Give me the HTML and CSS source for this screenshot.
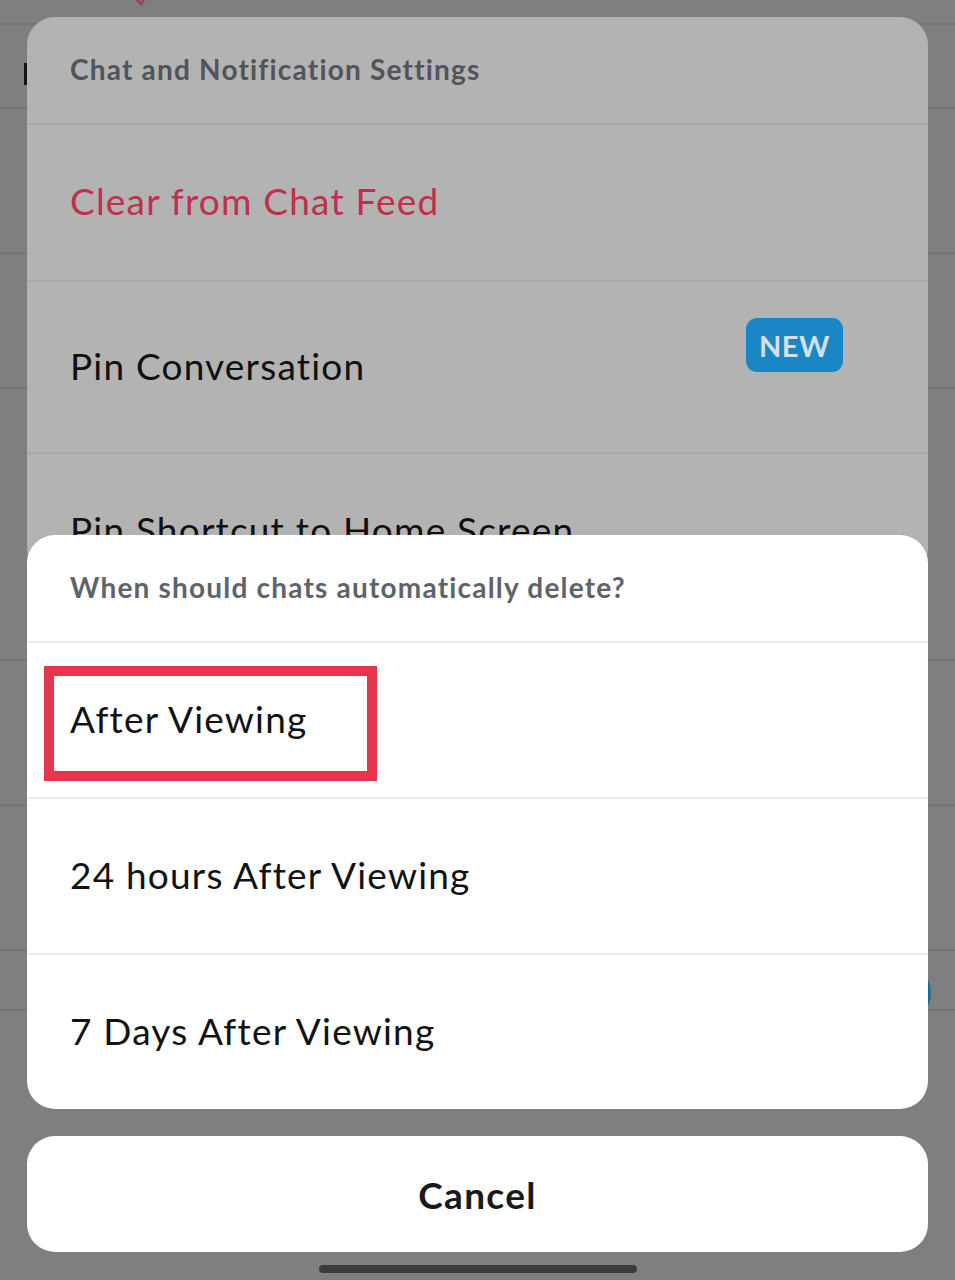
FILE: index.html
```html
<!DOCTYPE html>
<html>
<head>
<meta charset="utf-8">
<link rel="stylesheet" href="styles.css">
</head>
<body>
<div class="screen">
  <div class="bgpage">
    <div class="bgrow r1"><svg class="bgmark" width="20" height="8" viewBox="0 0 20 8"><path d="M2 0 L8 6 L12 0" fill="none" stroke="#9a4452" stroke-width="2.5"/></svg></div>
    <div class="bgrow r2"><span class="cursor"></span></div>
    <div class="bgrow r3"></div>
    <div class="bgrow r4"></div>
    <div class="bgrow r5"></div>
    <div class="bgrow r6"></div>
    <div class="bgrow r7"></div>
    <div class="bgrow r8"><span class="bgdot"></span></div>
    <div class="bgrow r9"></div>
  </div>

  <div class="sheets">
    <div class="sheet upper">
      <div class="row header">Chat and Notification Settings</div>
      <div class="row item danger">Clear from Chat Feed</div>
      <div class="row item pin">
        <span>Pin Conversation</span>
        <span class="badge">NEW</span>
      </div>
      <div class="row item shortcut">Pin Shortcut to Home Screen</div>
    </div>

    <div class="sheet lower">
      <div class="row header lh">When should chats automatically delete?</div>
      <div class="row item opt first">
        After Viewing
        <span class="highlight"></span>
      </div>
      <div class="row item opt">24 hours After Viewing</div>
      <div class="row item opt last">7 Days After Viewing</div>
    </div>

    <div class="cancel">Cancel</div>
    <div class="home"></div>
  </div>
</div>
</body>
</html>
```

FILE: styles.css
```css
html, body {
  margin: 0;
  padding: 0;
}
body {
  background: #7f7f7f;
  font-family: "Lato", "Noto Sans", sans-serif;
}
.screen {
  position: relative;
  width: 955px;
  height: 1280px;
  overflow: hidden;
  background: #7f7f7f;
}

/* dimmed page behind the sheets */
.bgpage {
  display: flex;
  flex-direction: column;
}
.bgrow {
  border-bottom: 2px solid #747474;
  position: relative;
  box-sizing: border-box;
}
.r1 { height: 25px; }
.r2 { height: 84px; }
.r3 { height: 145px; }
.r4 { height: 135px; }
.r5 { height: 272px; }
.r6 { height: 145px; }
.r7 { height: 145px; }
.r8 { height: 60px; }
.r9 { height: 100px; border-bottom: none; }
.bgmark {
  position: absolute;
  left: 133px;
  top: -2px;
}
.cursor {
  position: absolute;
  left: 24px;
  top: 38px;
  width: 3px;
  height: 22px;
  background: #151515;
}
.bgdot {
  position: absolute;
  left: 869px;
  top: 11px;
  width: 62px;
  height: 62px;
  border-radius: 50%;
  background: #1b6c98;
}

/* action sheets overlay */
.sheets {
  position: absolute;
  inset: 0;
  padding: 17px 27px 0;
  display: flex;
  flex-direction: column;
}
.sheet {
  border-radius: 28px;
  overflow: hidden;
  display: flex;
  flex-direction: column;
}
.upper {
  background: #b3b3b3;
  height: 560px;
  flex: none;
}
.lower {
  position: relative;
  background: #ffffff;
  margin-top: -42px;
  flex: none;
}
.row {
  display: flex;
  align-items: center;
  padding-left: 43px;
  box-sizing: border-box;
  flex: none;
}
.header {
  height: 108px;
  border-bottom: 2px solid #a9a9a9;
  font-size: 28px;
  font-weight: 700;
  letter-spacing: 1.2px;
  color: #50545b;
  padding-bottom: 2px;
}
.item {
  font-size: 37px;
  letter-spacing: 1.2px;
  color: #121212;
}
.upper .item {
  border-bottom: 2px solid #a9a9a9;
  color: #101010;
}
.danger {
  height: 157px;
  color: #c0304a !important;
  padding-bottom: 5px;
}
.pin {
  height: 172px;
  justify-content: space-between;
  align-items: flex-start;
  padding-top: 61px;
  padding-right: 85px;
  position: relative;
}
.badge {
  margin-top: -25px;
  width: 97px;
  height: 54px;
  border-radius: 11px;
  background: #1a86c4;
  color: #d3e0e8;
  font-size: 29px;
  font-weight: 700;
  display: flex;
  align-items: center;
  justify-content: center;
  letter-spacing: 0.5px;
}
.shortcut {
  height: 152px;
}

.lh {
  height: 108px;
  border-bottom: 2px solid #ececec;
  color: #5f636b;
}
.opt {
  height: 156px;
  border-bottom: 2px solid #ececec;
  position: relative;
  padding-bottom: 3px;
}
.opt.last {
  height: 154px;
  border-bottom: none;
}
.highlight {
  position: absolute;
  left: 17px;
  top: 23px;
  width: 333px;
  height: 115px;
  box-sizing: border-box;
  border: 10px solid #e8354e;
}

.cancel {
  margin-top: 27px;
  height: 116px;
  border-radius: 28px;
  background: #ffffff;
  display: flex;
  align-items: center;
  justify-content: center;
  font-size: 37px;
  font-weight: 700;
  letter-spacing: 1.3px;
  color: #1a1a1a;
  flex: none;
}
.home {
  margin: 13px auto 0;
  width: 318px;
  height: 8px;
  border-radius: 4px;
  background: #3b3b3b;
  flex: none;
}
```
